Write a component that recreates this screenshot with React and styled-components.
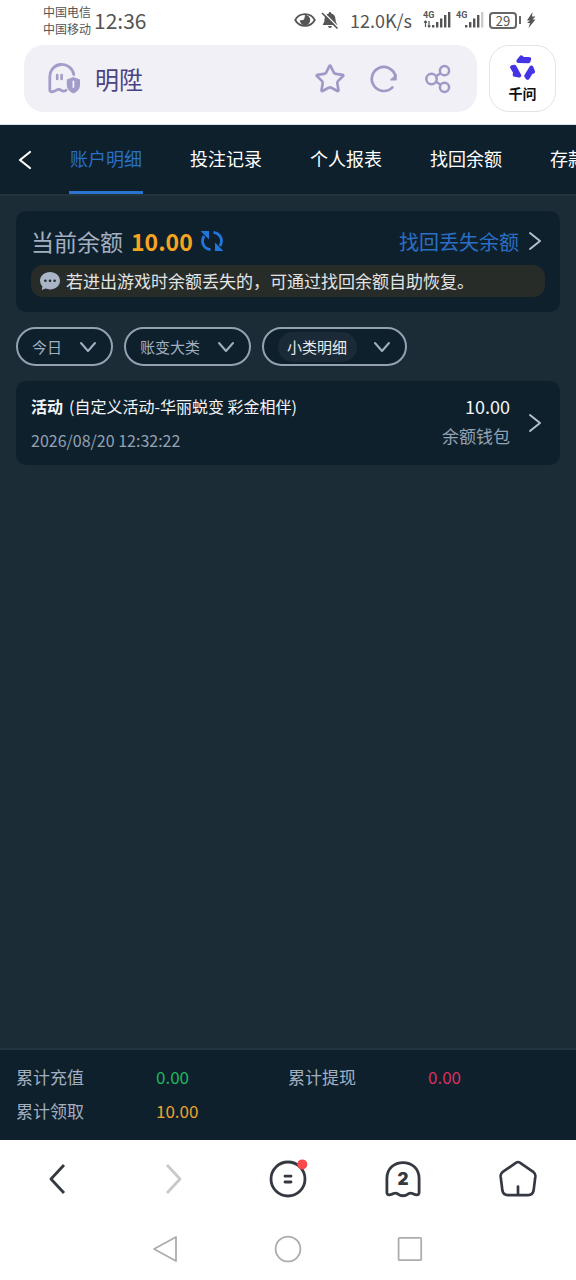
import { useState } from "react";
import styled, { createGlobalStyle } from "styled-components";
import { Star } from "lucide-react";

const tabs = ["账户明细", "投注记录", "个人报表", "找回余额", "存款记录"];

const filters = [
  { id: "date", label: "日期", value: "今日" },
  { id: "type", label: "类型", value: "账变大类" },
  { id: "subtype", label: "小类", value: "小类明细", highlight: true },
];

const records = [
  {
    id: 1,
    type: "活动",
    detail: "(自定义活动-华丽蜕变 彩金相伴)",
    time: "2026/08/20 12:32:22",
    amount: "10.00",
    wallet: "余额钱包",
  },
];

const totals = [
  { label: "累计充值", value: "0.00", color: "#1fb85c" },
  { label: "累计提现", value: "0.00", color: "#dc2f60" },
  { label: "累计领取", value: "10.00", color: "#eda42d" },
];

const Chevron = ({ dir = "right", width = 14, height = 20, stroke = 2 }) => {
  const paths = {
    right: "M2 2 L12 10 L2 18",
    left: "M12 2 L2 10 L12 18",
  };
  return (
    <svg
      width={width}
      height={height}
      viewBox="0 0 14 20"
      fill="none"
      stroke="currentColor"
      strokeWidth={stroke}
      strokeLinecap="round"
      strokeLinejoin="round"
      aria-hidden="true"
    >
      <path d={paths[dir]} />
    </svg>
  );
};

const PageArrow = ({ dir = "right" }) => (
  <svg width="18" height="32" viewBox="0 0 18 32" fill="none" stroke="currentColor" strokeWidth="2.8" strokeLinejoin="round" aria-hidden="true">
    <path d={dir === "left" ? "M15 2 L2 16 L15 30" : "M3 2 L16 16 L3 30"} />
  </svg>
);

const DownIcon = () => (
  <svg width="18" height="12" viewBox="0 0 18 12" fill="none" stroke="currentColor" strokeWidth="2" strokeLinecap="round" strokeLinejoin="round" aria-hidden="true">
    <path d="M2 2 L9 10 L16 2" />
  </svg>
);

const EyeIcon = () => (
  <svg width="22" height="16" viewBox="0 0 22 16" aria-hidden="true">
    <path d="M1.2 8 C5.5 0.2 16.5 0.2 20.8 8 C16.5 15.8 5.5 15.8 1.2 8 Z" fill="none" stroke="#555" strokeWidth="1.8" />
    <path d="M11 2.8 A5.2 5.2 0 1 1 5.8 8 Q8.8 9 10 7.2 Q11 5.4 11 2.8 Z" fill="#555" />
  </svg>
);

const BellOffIcon = () => (
  <svg width="18" height="18" viewBox="0 0 18 18" aria-hidden="true">
    <path d="M9 1 Q10.2 1 10.3 2.4 Q14.4 3.6 14.4 8 Q14.4 11.6 16.4 14 H1.6 Q3.6 11.6 3.6 8 Q3.6 3.6 7.7 2.4 Q7.8 1 9 1 Z" fill="#555" />
    <path d="M7 15 H11 Q10.6 17 9 17 Q7.4 17 7 15 Z" fill="#555" />
    <path d="M2 1 L17.5 16.5" stroke="#fff" strokeWidth="1.4" />
    <path d="M1 2 L16.5 17.5" stroke="#555" strokeWidth="1.6" />
  </svg>
);

const SignalIcon = ({ data, weak }) => (
  <svg width="28" height="20" viewBox="0 0 28 20" fill="#555" aria-hidden="true">
    <text x="0" y="8" fontFamily="Roboto, sans-serif" fontSize="9" fontWeight="700">
      4G
    </text>
    {data && <path d="M2.5 11 V17 M1 12.5 L2.5 11 L4 12.5 M6 11 V17 M4.8 15.5 L6 17 L7.4 15.5" stroke="#555" strokeWidth="1.2" fill="none" />}
    <rect x="9" y="15" width="2.4" height="2.5" />
    <rect x="13" y="12" width="2.4" height="5.5" />
    <rect x="17" y="8.5" width="2.4" height="9" />
    <rect x="21" y="5" width="2.4" height="12.5" />
    <rect x="25" y="2" width="2.4" height="15.5" fill={weak ? "#ccc" : "#555"} />
  </svg>
);

const BoltIcon = () => (
  <svg width="10" height="18" viewBox="0 0 10 18" fill="#555" aria-hidden="true">
    <path d="M6.5 1 L1 9.5 H4 L1 12 H4 L2.5 17 L9.5 8.5 H6.5 L9.5 5.5 H6 Z" />
  </svg>
);

const GhostShieldIcon = () => (
  <svg width="34" height="34" viewBox="0 0 34 34" fill="none" aria-hidden="true">
    <path
      d="M19 28.3 Q16.5 30 14 28.2 Q11.8 26.6 9.4 28.2 Q6.6 30.2 3.8 29.6 Q2.8 29.3 2.8 28 V15.5 C2.8 -1.5 24.5 -1.2 26.8 12.5"
      stroke="#a29cc9"
      strokeWidth="2.8"
      strokeLinecap="round"
    />
    <path d="M10.2 13 V17 M14.6 13 V17" stroke="#a29cc9" strokeWidth="2.6" strokeLinecap="round" />
    <path d="M26.4 15 L33 17.4 V23 Q33 28.4 26.4 31.6 Q19.8 28.4 19.8 23 V17.4 Z" fill="#a29cc9" />
    <path d="M26.4 19.5 V25" stroke="#f1f0f7" strokeWidth="1.8" strokeLinecap="round" />
  </svg>
);

const ReloadIcon = () => (
  <svg width="32" height="32" viewBox="0 0 32 32" fill="none" aria-hidden="true">
    <path d="M24.4 24.4 A12 12 0 1 1 27.3 12.5" stroke="#9f99c6" strokeWidth="2.7" strokeLinecap="round" />
    <path d="M28.2 11.4 V17 H22.4 Z" fill="#9f99c6" stroke="#9f99c6" strokeLinejoin="round" />
  </svg>
);

const ShareIcon = () => (
  <svg width="32" height="32" viewBox="0 0 32 32" fill="none" stroke="#9f99c6" strokeWidth="2.5" aria-hidden="true">
    <circle cx="9.5" cy="16" r="5.2" />
    <circle cx="22.5" cy="7.7" r="4.6" />
    <circle cx="22.5" cy="24.3" r="4.6" />
    <path d="M14 13.2 L18.6 10.2 M14 18.8 L18.6 21.8" />
  </svg>
);

const QianwenLogo = () => {
  const blade = "M8.4 6 L11.2 2.4 L13.2 4 H19.2 L18.4 6.2 Z";
  return (
    <svg width="26" height="26" viewBox="0 0 26 26" fill="#4534e6" stroke="#4534e6" strokeWidth="4" strokeLinejoin="round" aria-hidden="true">
      <path d={blade} />
      <path d={blade} transform="rotate(120 13 13)" />
      <path d={blade} transform="rotate(240 13 13)" />
    </svg>
  );
};

const RefreshIcon = () => (
  <svg width="24" height="22" viewBox="0 0 24 22" fill="none" aria-hidden="true">
    <path d="M10.5 19.6 C3 18.5 0.8 11.5 4 6" stroke="#2376dd" strokeWidth="2.8" />
    <path d="M13.5 2.4 C21 3.5 23.2 10.5 20 16" stroke="#2376dd" strokeWidth="2.8" />
    <path d="M0.6 1 H9 V9.4 L5 5.4 Z" fill="#2376dd" />
    <path d="M23.4 21 H15 V12.6 L19 16.6 Z" fill="#2376dd" />
  </svg>
);

const MessageIcon = () => (
  <svg width="20" height="20" viewBox="0 0 20 20" aria-hidden="true">
    <path d="M10 1 C15.5 1 20 4.8 20 9.8 C20 14.8 15.5 18.4 10 18.4 Q7.6 18.4 5.6 17.6 L1.8 19 L2.4 15.4 Q0 13 0 9.8 C0 4.8 4.5 1 10 1 Z" fill="#a9b5c6" />
    <circle cx="5.4" cy="9.8" r="1.3" fill="#272c29" />
    <circle cx="10" cy="9.8" r="1.3" fill="#272c29" />
    <circle cx="14.6" cy="9.8" r="1.3" fill="#272c29" />
  </svg>
);

const MenuIcon = () => (
  <svg width="40" height="40" viewBox="0 0 40 40" fill="none" stroke="#343941" strokeWidth="2.8" aria-hidden="true">
    <circle cx="20" cy="20" r="17" />
    <path d="M17 17.2 H23 M17 23 H23" strokeLinecap="round" />
    <circle cx="34.3" cy="5.4" r="5" fill="#f9494b" stroke="none" />
  </svg>
);

const PagesIcon = () => (
  <svg width="40" height="40" viewBox="0 0 40 40" fill="none" aria-hidden="true">
    <path
      d="M3.9 19.5 C3.9 -1.8 36.1 -1.8 36.1 19.5 V33.6 Q36.1 36 33.8 35.8 Q31.4 35.6 29.4 34.6 Q27.4 33.6 25.4 34.8 Q20 38.6 14.6 34.8 Q12.6 33.6 10.6 34.6 Q8.6 35.6 6.2 35.8 Q3.9 36 3.9 33.6 Z"
      stroke="#343941"
      strokeWidth="2.8"
      strokeLinejoin="round"
    />
    <text x="20" y="26" textAnchor="middle" fontFamily="Inter, sans-serif" fontSize="17" fontWeight="900" fill="#343941">
      2
    </text>
  </svg>
);

const HomeIcon = () => (
  <svg width="40" height="40" viewBox="0 0 40 40" fill="none" stroke="#343941" strokeWidth="2.7" strokeLinecap="round" strokeLinejoin="round" aria-hidden="true">
    <path d="M18.2 3.6 Q20 2.4 21.8 3.6 L35.6 13.2 Q37.6 14.8 37.4 17.2 L35.6 31.6 Q34.8 36.2 30.2 36.2 H9.8 Q5.2 36.2 4.4 31.6 L2.6 17.2 Q2.4 14.8 4.4 13.2 Z" />
    <path d="M20 27.6 V35.4" />
  </svg>
);

const SystemIcon = ({ children }) => (
  <svg width="28" height="28" viewBox="0 0 28 28" fill="none" stroke="#adadad" strokeWidth="1.8" strokeLinejoin="round" aria-hidden="true">
    {children}
  </svg>
);

const App = () => {
  const [activeTab, setActiveTab] = useState(tabs[0]);

  return (
    <Page>
      <GlobalStyle />
      <StatusBar>
        <Carriers>
          <span>中国电信</span>
          <span>中国移动</span>
        </Carriers>
        <Clock>12:36</Clock>
        <StatusIcons>
          <EyeIcon />
          <BellOffIcon />
          <Speed>12.0K/s</Speed>
          <SignalIcon data />
          <SignalIcon weak />
          <Battery>
            <BatteryLevel>29</BatteryLevel>
            <BatteryTip />
          </Battery>
          <BoltIcon />
        </StatusIcons>
      </StatusBar>

      <BrowserBar>
        <AddressBar>
          <GhostShieldIcon />
          <SiteTitle>明陞</SiteTitle>
          <AddressActions>
            <IconButton aria-label="收藏">
              <Star size={32} color="#9f99c6" strokeWidth={2} />
            </IconButton>
            <IconButton aria-label="刷新">
              <ReloadIcon />
            </IconButton>
            <IconButton aria-label="分享">
              <ShareIcon />
            </IconButton>
          </AddressActions>
        </AddressBar>
        <AssistantButton>
          <QianwenLogo />
          千问
        </AssistantButton>
      </BrowserBar>

      <TabBar>
        <BackButton aria-label="返回">
          <Chevron dir="left" stroke={2.2} />
        </BackButton>
        {tabs.map((tab) => (
          <Tab key={tab} $active={tab === activeTab} onClick={() => setActiveTab(tab)}>
            {tab}
          </Tab>
        ))}
      </TabBar>

      <Content>
        <BalanceCard>
          <BalanceRow>
            <BalanceLabel>当前余额</BalanceLabel>
            <Balance>10.00</Balance>
            <IconButton aria-label="刷新余额">
              <RefreshIcon />
            </IconButton>
            <RecoverLink href="#recover">
              找回丢失余额
              <Chevron />
            </RecoverLink>
          </BalanceRow>
          <Notice>
            <MessageIcon />
            若进出游戏时余额丢失的，可通过找回余额自助恢复。
          </Notice>
        </BalanceCard>

        <Filters>
          {filters.map(({ id, label, value, highlight }) => (
            <Filter key={id} htmlFor={id}>
              <FilterSelect id={id} aria-label={label} $highlight={highlight}>
                <option>{value}</option>
              </FilterSelect>
              <DownIcon />
            </Filter>
          ))}
        </Filters>

        {records.map((record) => (
          <Record key={record.id} href="#record">
            <RecordInfo>
              <RecordTitle>
                <strong>{record.type}</strong>
                {record.detail}
              </RecordTitle>
              <RecordTime>{record.time}</RecordTime>
            </RecordInfo>
            <RecordAmount>
              <Amount>{record.amount}</Amount>
              <Wallet>{record.wallet}</Wallet>
            </RecordAmount>
            <Chevron />
          </Record>
        ))}
      </Content>

      <Summary>
        {totals.map(({ label, value, color }) => (
          <Total key={label}>
            <dt>{label}</dt>
            <TotalValue $color={color}>{value}</TotalValue>
          </Total>
        ))}
      </Summary>

      <BrowserNav>
        <NavButton aria-label="后退">
          <PageArrow dir="left" />
        </NavButton>
        <NavButton aria-label="前进" disabled>
          <PageArrow />
        </NavButton>
        <NavButton aria-label="菜单">
          <MenuIcon />
        </NavButton>
        <NavButton aria-label="窗口">
          <PagesIcon />
        </NavButton>
        <NavButton aria-label="主页">
          <HomeIcon />
        </NavButton>
      </BrowserNav>

      <SystemNav>
        <IconButton aria-label="系统返回">
          <SystemIcon>
            <path d="M24 2 V26 L2 14 Z" />
          </SystemIcon>
        </IconButton>
        <IconButton aria-label="桌面">
          <SystemIcon>
            <circle cx="14" cy="14" r="12.4" />
          </SystemIcon>
        </IconButton>
        <IconButton aria-label="最近任务">
          <SystemIcon>
            <rect x="2.6" y="2.8" width="22.6" height="22.4" rx="1" />
          </SystemIcon>
        </IconButton>
      </SystemNav>
    </Page>
  );
};

const GlobalStyle = createGlobalStyle`
  * {
    box-sizing: border-box;
  }

  body {
    margin: 0;
    background: #fff;
    font-family: "Noto Sans CJK SC", sans-serif;
  }

  button,
  select {
    padding: 0;
    border: 0;
    background: none;
    color: inherit;
    font: inherit;
  }

  a {
    color: inherit;
    text-decoration: none;
  }

  svg {
    flex-shrink: 0;
  }
`;

const Page = styled.div`
  display: flex;
  flex-direction: column;
  min-height: 100vh;
  overflow: hidden;
`;

const StatusBar = styled.header`
  display: flex;
  align-items: center;
  height: 40px;
  padding: 0 40px 0 43px;
  color: #555;
`;

const Carriers = styled.div`
  display: flex;
  flex-direction: column;
  font-size: 12px;
  line-height: 17px;
`;

const Clock = styled.time`
  margin-left: 3px;
  font-size: 21px;
  line-height: 24px;
`;

const StatusIcons = styled.div`
  display: flex;
  align-items: center;
  gap: 5px;
  margin-left: auto;
`;

const Speed = styled.span`
  margin: 0 6px;
  font-size: 18px;
  line-height: 24px;
`;

const Battery = styled.div`
  display: flex;
  align-items: center;
  gap: 2px;
`;

const BatteryLevel = styled.span`
  width: 28px;
  border: 2px solid #666;
  border-radius: 4px;
  font-size: 13px;
  line-height: 13px;
  text-align: center;
`;

const BatteryTip = styled.span`
  width: 2px;
  height: 8px;
  background: #666;
`;

const BrowserBar = styled.div`
  display: flex;
  gap: 12px;
  padding: 5px 20px 12px 24px;
  border-bottom: 1px solid #d5e0e8;
`;

const AddressBar = styled.div`
  display: flex;
  flex: 1;
  align-items: center;
  height: 67px;
  padding: 0 23px;
  border-radius: 20px;
  background: #f1f0f7;
`;

const SiteTitle = styled.span`
  margin-left: 14px;
  color: #4b4282;
  font-size: 24px;
`;

const AddressActions = styled.div`
  display: flex;
  gap: 22px;
  margin-left: auto;
`;

const IconButton = styled.button`
  display: flex;
  align-items: center;
  justify-content: center;
`;

const AssistantButton = styled.button`
  display: flex;
  flex-direction: column;
  align-items: center;
  justify-content: center;
  gap: 2px;
  width: 67px;
  height: 67px;
  border: 1px solid #e3e3e8;
  border-radius: 20px;
  color: #111;
  font-size: 14px;
  font-weight: 700;
  line-height: 20px;
`;

const TabBar = styled.nav`
  display: flex;
  gap: 46px;
  height: 71px;
  border-bottom: 2px solid #24343f;
  background: #0f202d;
  overflow: hidden;
`;

const BackButton = styled.button`
  display: flex;
  flex-shrink: 0;
  align-items: center;
  width: 23px;
  padding-left: 18px;
  color: #fff;
`;

const Tab = styled.button`
  flex-shrink: 0;
  width: 74px;
  border-bottom: 3px solid ${({ $active }) => ($active ? "#2a74d0" : "transparent")};
  color: ${({ $active }) => ($active ? "#2a6fc4" : "#fff")};
  font-size: 18px;
  white-space: nowrap;
`;

const Content = styled.main`
  display: flex;
  flex: 1;
  flex-direction: column;
  gap: 15px;
  padding: 15px 16px;
  background: #1b2c37;
`;

const BalanceCard = styled.section`
  padding: 14px 15px 15px;
  border-radius: 10px;
  background: #0f202d;
`;

const BalanceRow = styled.div`
  display: flex;
  align-items: center;
  height: 32px;
  margin-bottom: 8px;
`;

const BalanceLabel = styled.span`
  color: #a1afc0;
  font-size: 23px;
`;

const Balance = styled.strong`
  margin: 0 7px 0 8px;
  color: #f7a51f;
  font-size: 23px;
`;

const RecoverLink = styled.a`
  display: flex;
  align-items: center;
  gap: 9px;
  margin-left: auto;
  padding-right: 3px;
  color: #2a6fc4;
  font-size: 20px;

  svg {
    color: #b3c0cf;
  }
`;

const Notice = styled.p`
  display: flex;
  align-items: center;
  gap: 6px;
  min-height: 32px;
  margin: 0;
  padding: 0 9px;
  border-radius: 12px;
  background: #272c29;
  color: #e2e4e5;
  font-size: 17px;
  line-height: 24px;
`;

const Filters = styled.div`
  display: flex;
  gap: 11px;
`;

const Filter = styled.label`
  display: flex;
  align-items: center;
  justify-content: space-between;
  gap: 16px;
  height: 39px;
  padding: 0 14px;
  border: 2px solid #93a1b1;
  border-radius: 20px;
  background: #0f202d;
  color: #a1afc0;
`;

const FilterSelect = styled.select`
  height: 30px;
  padding: ${({ $highlight }) => ($highlight ? "0 9px" : "0")};
  border-radius: 15px;
  background: ${({ $highlight }) => ($highlight ? "#1a2a36" : "none")};
  color: ${({ $highlight }) => ($highlight ? "#e6eaee" : "inherit")};
  font-size: 15px;
  line-height: 30px;
  appearance: none;
`;

const Record = styled.a`
  display: flex;
  align-items: center;
  justify-content: space-between;
  gap: 18px;
  padding: 10px 18px 10px 15px;
  border-radius: 10px;
  background: #0f202d;
  color: #b3c0cf;
`;

const RecordInfo = styled.div`
  display: flex;
  flex: 1;
  flex-direction: column;
  gap: 4px;
`;

const RecordTitle = styled.div`
  color: #f2f5f8;
  font-size: 16px;
  line-height: 30px;

  strong {
    margin-right: 6px;
  }
`;

const RecordTime = styled.time`
  color: #93a2b3;
  font-size: 16px;
  line-height: 30px;
`;

const RecordAmount = styled.div`
  display: flex;
  flex-direction: column;
  align-items: flex-end;
  align-self: flex-start;
  line-height: 30px;
`;

const Amount = styled.span`
  color: #f2f5f8;
  font-size: 18px;
`;

const Wallet = styled.span`
  color: #93a2b3;
  font-size: 17px;
`;

const Summary = styled.dl`
  display: grid;
  grid-template-columns: 1fr 1fr;
  margin: 0;
  padding: 10px 16px 12px;
  border-top: 2px solid #24343f;
  background: #0f202d;
  color: #a1afc0;
  font-size: 17px;
  line-height: 34px;
`;

const Total = styled.div`
  display: grid;
  grid-template-columns: 140px 1fr;
`;

const TotalValue = styled.dd`
  margin: 0;
  color: ${({ $color }) => $color};
`;

const BrowserNav = styled.nav`
  display: grid;
  grid-template-columns: repeat(5, 1fr);
  height: 77px;
  background: #fff;
`;

const NavButton = styled.button`
  display: flex;
  align-items: center;
  justify-content: center;
  color: #343941;

  &:disabled {
    color: #c9c9c9;
  }
`;

const SystemNav = styled.nav`
  display: flex;
  justify-content: center;
  gap: 94px;
  height: 63px;
  background: #fff;
`;

export default App;
